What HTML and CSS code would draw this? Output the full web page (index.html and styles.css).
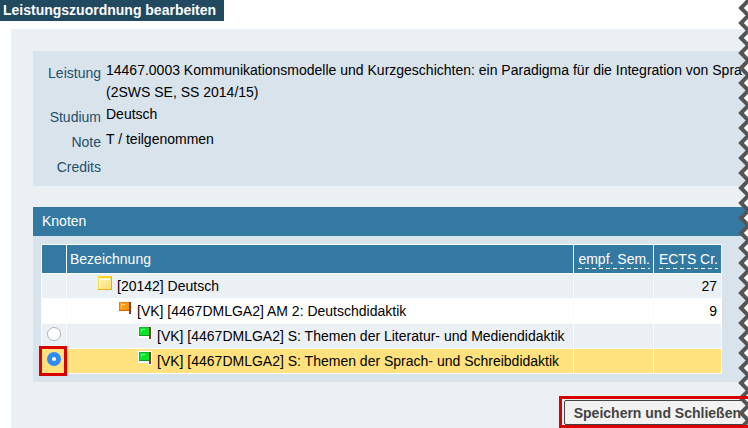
FILE: index.html
```html
<!DOCTYPE html>
<html lang="de">
<head>
<meta charset="utf-8">
<title>Leistungszuordnung bearbeiten</title>
<link rel="stylesheet" href="styles.css">
</head>
<body>
<svg class="symbols" aria-hidden="true">
  <defs>
    <linearGradient id="note" x1="0" y1="0" x2="1" y2="1">
      <stop offset="0" stop-color="#fffbd0"/><stop offset="1" stop-color="#fbd95a"/>
    </linearGradient>
    <linearGradient id="amber" x1="0" y1="0" x2="1" y2="1">
      <stop offset="0" stop-color="#ffb52e"/><stop offset="1" stop-color="#f98a00"/>
    </linearGradient>
    <pattern id="zigzag" width="12" height="15" patternUnits="userSpaceOnUse">
      <path d="M10.500 -7.500L3 0L10.500 7.500L3 15L10.500 22.500H12V-7.500Z" fill="#fff"/>
      <path d="M10.500 -7.500L3 0L10.500 7.500L3 15L10.500 22.500" fill="none" stroke="#555" stroke-width="4"/>
    </pattern>
    <symbol id="flag-green" viewBox="0 0 14 14">
      <path d="M0 0H14V14H10V12H0Z" fill="#fff"/>
      <path d="M1 1H11V10H1Z" fill="#08e32b"/>
      <path d="M1.500 10V1.500H11" fill="none" stroke="#12b82b"/>
      <path d="M3.500 6V3.500H7" fill="none" stroke="#82f795"/>
      <path d="M1 9.500H11" fill="none" stroke="#129a27"/>
      <path d="M11 1H13V13H11Z" fill="#74401d"/>
    </symbol>
    <symbol id="flag-orange" viewBox="0 0 14 14">
      <path d="M1 1H11V10H1Z" fill="url(#amber)"/>
      <path d="M1.500 10V1.500H11" fill="none" stroke="#f07a08"/>
      <path d="M3.500 6V3.500H7" fill="none" stroke="#ffd878"/>
      <path d="M1 9.500H11" fill="none" stroke="#d86408"/>
      <path d="M11 1H13V13H11Z" fill="#8a3d14"/>
    </symbol>
  </defs>
</svg>
<h1 class="title">Leistungszuordnung bearbeiten</h1>
<main class="panel">
  <dl class="details">
    <dt>Leistung</dt><dd>14467.0003 Kommunikationsmodelle und Kurzgeschichten: ein Paradigma für die Integration von Spra<br>(2SWS SE, SS 2014/15)</dd>
    <dt>Studium</dt><dd>Deutsch</dd>
    <dt>Note</dt><dd>T / teilgenommen</dd>
    <dt>Credits</dt><dd></dd>
  </dl>
  <section class="nodes">
    <h2>Knoten</h2>
    <table>
      <colgroup><col class="c-pick"><col><col class="c-sem"><col class="c-ects"></colgroup>
      <thead>
        <tr><th></th><th>Bezeichnung</th><th class="num"><abbr>empf. Sem.</abbr></th><th class="num"><abbr>ECTS Cr.</abbr></th></tr>
      </thead>
      <tbody>
        <tr>
          <td></td>
          <td><div class="node level-1"><svg class="icon" viewBox="0 0 14 14"><rect width="14" height="14" fill="url(#note)"/><path d="M0 1H14" stroke="#f9d423" stroke-width="2"/><path d="M0.500 0V14" stroke="#f8dc50"/><path d="M2 3.500H12" stroke="#fffef0"/><path d="M0 13.500H13.500V1" fill="none" stroke="#e3b01c"/></svg><span>[20142] Deutsch</span></div></td>
          <td></td><td class="num">27</td>
        </tr>
        <tr class="plain">
          <td></td>
          <td><div class="node level-2"><svg class="icon"><use href="#flag-orange"/></svg><span>[VK] [4467DMLGA2] AM 2: Deutschdidaktik</span></div></td>
          <td></td><td class="num">9</td>
        </tr>
        <tr>
          <td class="pick"><input type="radio" name="node" aria-label="Themen der Literatur- und Mediendidaktik"></td>
          <td><div class="node level-3"><svg class="icon"><use href="#flag-green"/></svg><span>[VK] [4467DMLGA2] S: Themen der Literatur- und Mediendidaktik</span></div></td>
          <td></td><td></td>
        </tr>
        <tr class="selected">
          <td class="pick marked"><input type="radio" name="node" checked aria-label="Themen der Sprach- und Schreibdidaktik"></td>
          <td><div class="node level-3"><svg class="icon"><use href="#flag-green"/></svg><span>[VK] [4467DMLGA2] S: Themen der Sprach- und Schreibdidaktik</span></div></td>
          <td></td><td></td>
        </tr>
      </tbody>
    </table>
  </section>
  <div class="actions"><div class="save"><button type="button">Speichern und Schließen</button></div></div>
</main>
<svg class="tear" aria-hidden="true"><g transform="translate(0 8)"><rect y="-15" width="12" height="120%" fill="url(#zigzag)"/></g></svg>
</body>
</html>
```
FILE: styles.css
```css
* { box-sizing: border-box; }
html, body { height: 100%; }
body {
  position: relative;
  display: flex;
  flex-direction: column;
  margin: 0;
  overflow: hidden;
  background: #fff;
  color: #000;
  font: 14px/22px "Liberation Sans", Arial, sans-serif;
}
.symbols { position: absolute; width: 0; height: 0; }
.title {
  align-self: flex-start;
  margin: 0;
  padding: 0 8px 0 3px;
  background: #21495f;
  color: #fff;
  font-size: 14px;
  line-height: 21px;
}
.panel {
  flex: 1 0 auto;
  margin: 8px 0 0 11px;
  padding: 22px 0 0 22px;
  background: #ebf0f4;
}
.details {
  display: grid;
  grid-template-columns: 68px minmax(0, 1fr);
  column-gap: 5px;
  grid-auto-rows: minmax(25px, auto);
  margin: 0;
  padding: 8px 0;
  background: #d8e3ec;
}
.details dt { padding-top: 3px; text-align: right; color: #23506a; }
.details dd { margin: 0; white-space: nowrap; overflow: hidden; }
.nodes { margin-top: 21px; padding-bottom: 8px; background: #d8e3ec; }
.nodes h2 {
  margin: 0 0 8px;
  padding: 0 9px;
  background: #3479a2;
  color: #fff;
  font-size: 14px;
  font-weight: 400;
  line-height: 29px;
}
.nodes table {
  width: calc(100% - 34px);
  margin-left: 8px;
  table-layout: fixed;
  border-collapse: separate;
  border-spacing: 0;
  border: solid #fafbfc;
  border-width: 1px 0 0 1px;
}
.c-pick { width: 25px; }
.c-sem { width: 80px; }
.c-ects { width: 68px; }
th, td {
  height: 25px;
  padding: 0 3px;
  border: solid #fafbfc;
  border-width: 0 1px 1px 0;
  background: #ebf0f4;
  text-align: left;
  font-weight: 400;
  line-height: 22px;
  white-space: nowrap;
}
th { height: 29px; background: #3479a2; color: #fff; }
abbr {
  padding-bottom: 2px;
  background: repeating-linear-gradient(90deg, #fff 0 4px, transparent 4px 7px) left bottom / 100% 1px no-repeat;
}
.plain td { background: #fff; }
.selected td { background: #ffe17d; }
.num { text-align: right; }
td.num { padding-right: 4px; }
.node { display: flex; gap: 5px; height: 24px; }
.node span { padding-top: 1px; }
.level-1 { padding-left: 28px; }
.level-2 { padding-left: 48px; }
.level-3 { padding-left: 68px; }
.icon { flex: none; width: 14px; height: 14px; margin-top: 2px; }
.pick { padding: 0; text-align: center; }
.pick input {
  appearance: none;
  display: block;
  width: 14px;
  height: 14px;
  margin: 0 auto 4px;
  border: 1px solid #b0b0b0;
  border-radius: 50%;
  background: #fff;
}
.pick input:checked {
  border: 5px solid #2d8cf5;
}
.marked { position: relative; }
.marked::after {
  content: "";
  position: absolute;
  inset: -3px -1px -3px -3px;
  border: 3px solid #d90000;
}
.actions { display: flex; justify-content: flex-end; padding-top: 14px; }
.save {
  position: relative;
  margin-right: -12px;
  padding: 4px 0 3px 5px;
}
.save::after {
  content: "";
  position: absolute;
  inset: 0;
  z-index: 3;
  border: 3px solid #d90000;
  pointer-events: none;
}
.save button {
  display: block;
  height: 25px;
  padding: 0 18px 0 9px;
  border: 1px solid #444;
  border-radius: 2px;
  background: #f2f2f2;
  color: #444;
  font: bold 14px/22px "Liberation Sans", Arial, sans-serif;
}
.tear { position: absolute; top: 0; right: -2px; z-index: 2; width: 12px; height: 100%; }
```
